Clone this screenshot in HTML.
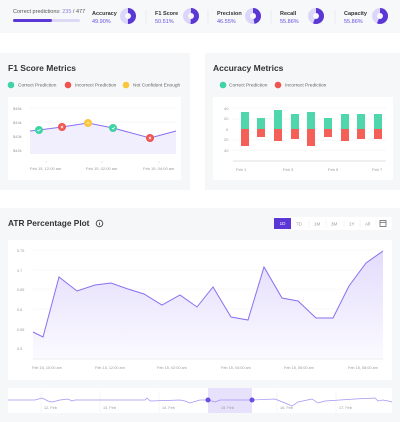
<!DOCTYPE html>
<html><head><style>
*{margin:0;padding:0;box-sizing:border-box}
body{width:400px;height:422px;background:#fff;font-family:"Liberation Sans",sans-serif;position:relative;overflow:hidden;color:#222}
.a{position:absolute}
.card{position:absolute;background:#f6f7f9}
</style></head><body>
<div class="a" style="left:0;top:0;width:400px;height:33px;background:#f7f8fa"></div>
<div class="a" style="left:13px;top:9px;font-size:5.5px;color:#555">Correct predictions: <span style="color:#8b7ce0">235</span> / 477</div>
<div class="a" style="left:13px;top:19px;width:67px;height:3px;background:#ddd8f5;border-radius:2px"></div>
<div class="a" style="left:13px;top:19px;width:39px;height:3px;background:#5b37d6;border-radius:2px"></div>
<svg class="a" style="left:0;top:0" width="400" height="33">
<g font-size="5.5" font-family="Liberation Sans" >
<text x="92" y="15" font-weight="bold" fill="#333">Accuracy</text><text x="92" y="23" fill="#6a4ee0">49.90%</text>
<text x="155" y="15" font-weight="bold" fill="#333">F1 Score</text><text x="155" y="23" fill="#6a4ee0">50.51%</text>
<text x="217" y="15" font-weight="bold" fill="#333">Precision</text><text x="217" y="23" fill="#6a4ee0">46.55%</text>
<text x="280" y="15" font-weight="bold" fill="#333">Recall</text><text x="280" y="23" fill="#6a4ee0">55.86%</text>
<text x="344" y="15" font-weight="bold" fill="#333">Capacity</text><text x="344" y="23" fill="#6a4ee0">55.86%</text>
</g>
<g stroke="#e2e2e8" stroke-width="0.6"><line x1="146" y1="10" x2="146" y2="24"/><line x1="208" y1="10" x2="208" y2="24"/><line x1="271" y1="10" x2="271" y2="24"/><line x1="335" y1="10" x2="335" y2="24"/></g>
<g fill="none" stroke-width="5">
<circle cx="128" cy="16" r="5.5" stroke="#ddd6fb"/><circle cx="128" cy="16" r="5.5" stroke="#5b37d6" stroke-dasharray="17.2 40" transform="rotate(-90 128 16)"/>
<circle cx="191" cy="16" r="5.5" stroke="#ddd6fb"/><circle cx="191" cy="16" r="5.5" stroke="#5b37d6" stroke-dasharray="17.5 40" transform="rotate(-90 191 16)"/>
<circle cx="253" cy="16" r="5.5" stroke="#ddd6fb"/><circle cx="253" cy="16" r="5.5" stroke="#5b37d6" stroke-dasharray="16.1 40" transform="rotate(-90 253 16)"/>
<circle cx="316" cy="16" r="5.5" stroke="#ddd6fb"/><circle cx="316" cy="16" r="5.5" stroke="#5b37d6" stroke-dasharray="19.3 40" transform="rotate(-90 316 16)"/>
<circle cx="380" cy="16" r="5.5" stroke="#ddd6fb"/><circle cx="380" cy="16" r="5.5" stroke="#5b37d6" stroke-dasharray="19.3 40" transform="rotate(-90 380 16)"/>
</g></svg>

<div class="card" style="left:0;top:53px;width:190px;height:137px"></div>
<div class="card" style="left:205px;top:53px;width:195px;height:137px"></div>
<div class="a" style="left:8px;top:63px;font-size:8.5px;font-weight:bold;color:#333">F1 Score Metrics</div>
<div class="a" style="left:213px;top:63px;font-size:8.5px;font-weight:bold;color:#333">Accuracy Metrics</div>
<div class="a" style="left:8px;top:97px;width:173px;height:83px;background:#fff"></div>
<div class="a" style="left:213px;top:97px;width:180px;height:83px;background:#fff"></div>
<svg class="a" style="left:0;top:50px" width="400" height="140">
<g font-family="Liberation Sans" font-size="4.8" fill="#666">
<circle cx="11" cy="35" r="3.3" fill="#3fd3a5"/><text x="18" y="36.6">Correct Prediction</text>
<circle cx="68" cy="35" r="3.3" fill="#f0544f"/><text x="75" y="36.6">Incorrect Prediction</text>
<circle cx="126" cy="35" r="3.3" fill="#f9c63c"/><text x="133" y="36.6">Not Confident Enough</text>
<circle cx="223" cy="35" r="3.3" fill="#3fd3a5"/><text x="229" y="36.6">Correct Prediction</text>
<circle cx="278" cy="35" r="3.3" fill="#f0544f"/><text x="285" y="36.6">Incorrect Prediction</text>
</g>
<g stroke="#eee" stroke-width="0.5"><line x1="30" y1="58" x2="176" y2="58"/><line x1="30" y1="72" x2="176" y2="72"/><line x1="30" y1="86" x2="176" y2="86"/><line x1="30" y1="100" x2="176" y2="100"/>
<line x1="233" y1="58" x2="386" y2="58"/><line x1="233" y1="69" x2="386" y2="69"/><line x1="233" y1="90" x2="386" y2="90"/><line x1="233" y1="100" x2="386" y2="100"/><line x1="233" y1="111" x2="386" y2="111"/></g>
<path d="M30 81 L39 80 L62 77 L88 73 L113 78 L150 88 L176 81 L176 104 L30 104Z" fill="#f1eefd"/>
<g font-family="Liberation Sans" font-size="4" fill="#999"><text x="13" y="60">$45k</text><text x="13" y="74">$44k</text><text x="13" y="88">$43k</text><text x="13" y="102">$42k</text>
<text x="30" y="120">Feb 15, 12:00 am</text><text x="86" y="120">Feb 15, 02:00 am</text><text x="143" y="120">Feb 15, 04:00 am</text>
<text x="224" y="60">40</text><text x="224" y="70">20</text><text x="226" y="81">0</text><text x="224" y="91">20</text><text x="224" y="102">40</text>
<text x="236" y="121">Feb 1</text><text x="283" y="121">Feb 3</text><text x="328" y="121">Feb 5</text><text x="372" y="121">Feb 7</text></g>
<polyline points="30,81 39,80 62,77 88,73 113,78 150,88 176,81" fill="none" stroke="#8a6ff0" stroke-width="1"/>
<circle cx="39" cy="80" r="4" fill="#3fd3a5"/><circle cx="62" cy="77" r="4" fill="#f0544f"/><circle cx="88" cy="73" r="4" fill="#f9c63c"/><circle cx="113" cy="78" r="4" fill="#3fd3a5"/><circle cx="150" cy="88" r="4" fill="#f0544f"/>
<g stroke="#fff" stroke-width="0.7" fill="none"><path d="M37.5 80l1 1 2-2M112 78l1 1 2-2M60.8 75.8l2.4 2.4M63.2 75.8l-2.4 2.4M148.8 86.8l2.4 2.4M151.2 86.8l-2.4 2.4M86.5 73h3"/></g>
<g stroke="#ccc" stroke-width="0.5"><line x1="46" y1="111" x2="46" y2="113"/><line x1="102" y1="111" x2="102" y2="113"/><line x1="159" y1="111" x2="159" y2="113"/><line x1="233" y1="111" x2="386" y2="111"/></g>
<g fill="#4fd6ad"><rect x="241" y="62" width="8" height="17"/><rect x="257" y="68" width="8" height="11"/><rect x="274" y="60" width="8" height="19"/><rect x="291" y="64" width="8" height="15"/><rect x="307" y="62" width="8" height="17"/><rect x="324" y="68" width="8" height="11"/><rect x="341" y="64" width="8" height="15"/><rect x="357" y="64" width="8" height="15"/><rect x="374" y="64" width="8" height="15"/></g>
<g fill="#f45f57"><rect x="241" y="79" width="8" height="17"/><rect x="257" y="79" width="8" height="8"/><rect x="274" y="79" width="8" height="12"/><rect x="291" y="79" width="8" height="10"/><rect x="307" y="79" width="8" height="17"/><rect x="324" y="79" width="8" height="8"/><rect x="341" y="79" width="8" height="12"/><rect x="357" y="79" width="8" height="10"/><rect x="374" y="79" width="8" height="10"/></g>
</svg>

<div class="card" style="left:0;top:208px;width:400px;height:214px"></div>
<div class="a" style="left:8px;top:218px;font-size:8.3px;font-weight:bold;color:#333;white-space:nowrap">ATR Percentage Plot</div>
<svg class="a" style="left:95px;top:219px" width="9" height="9"><circle cx="4.5" cy="4.5" r="3.3" fill="none" stroke="#444" stroke-width="0.9"/><line x1="4.5" y1="3.5" x2="4.5" y2="6.3" stroke="#444" stroke-width="0.9"/></svg>
<div class="a" style="left:274px;top:217px;width:118px;height:13px;background:#fff"></div>
<div class="a" style="left:274px;top:218px;width:17px;height:11px;background:#5b37d6;color:#fff;font-size:4.5px;text-align:center;line-height:11px">1D</div>
<svg class="a" style="left:274px;top:217px" width="118" height="13"><g font-family="Liberation Sans" font-size="4.5" fill="#999"><text x="22" y="8.5">7D</text><text x="40" y="8.5">1M</text><text x="57" y="8.5">3M</text><text x="75" y="8.5">1Y</text><text x="91" y="8.5">All</text></g>
<g stroke="#eee" stroke-width="0.5"><line x1="35" y1="3" x2="35" y2="10"/><line x1="52" y1="3" x2="52" y2="10"/><line x1="70" y1="3" x2="70" y2="10"/><line x1="86" y1="3" x2="86" y2="10"/><line x1="102" y1="3" x2="102" y2="10"/></g>
<rect x="106" y="3.5" width="6" height="6" fill="none" stroke="#555" stroke-width="0.7"/><line x1="106" y1="5.3" x2="112" y2="5.3" stroke="#555" stroke-width="0.7"/></svg>
<div class="a" style="left:8px;top:240px;width:384px;height:140px;background:#fff"></div>
<svg class="a" style="left:0;top:240px" width="400" height="182">
<defs><linearGradient id="g" x1="0" y1="0" x2="0" y2="1"><stop offset="0" stop-color="#e3dcfc"/><stop offset="1" stop-color="#fbfaff"/></linearGradient></defs>
<g stroke="#f0f0f0" stroke-width="0.5"><line x1="33" y1="10" x2="383" y2="10"/><line x1="33" y1="30" x2="383" y2="30"/><line x1="33" y1="49" x2="383" y2="49"/><line x1="33" y1="69" x2="383" y2="69"/><line x1="33" y1="89" x2="383" y2="89"/><line x1="33" y1="108" x2="383" y2="108"/></g>
<g font-family="Liberation Sans" font-size="3.8" fill="#999"><text x="17" y="12">0.75</text><text x="17" y="32">0.7</text><text x="17" y="51">0.65</text><text x="17" y="71">0.6</text><text x="17" y="91">0.55</text><text x="17" y="110">0.5</text>
<text x="32" y="129">Feb 15, 10:00 am</text><text x="95" y="129">Feb 15, 12:00 am</text><text x="157" y="129">Feb 15, 02:00 am</text><text x="221" y="129">Feb 15, 04:00 am</text><text x="284" y="129">Feb 15, 06:00 am</text><text x="348" y="129">Feb 15, 08:00 am</text></g>
<path d="M33 92 L43 97 L59 37 L77 51 L95 45 L111 43 L128 49 L144 54 L162 65 L180 55 L197 67 L213 47 L231 77 L248 80 L264 27 L282 58 L298 61 L316 78 L333 78 L349 46 L366 23 L383 11 L383 119 L33 119Z" fill="url(#g)"/>
<polyline points="33,92 43,97 59,37 77,51 95,45 111,43 128,49 144,54 162,65 180,55 197,67 213,47 231,77 248,80 264,27 282,58 298,61 316,78 333,78 349,46 366,23 383,11" fill="none" stroke="#8a6ff0" stroke-width="1"/>
<line x1="33" y1="119" x2="383" y2="119" stroke="#ddd" stroke-width="0.5"/>
<rect x="8" y="148" width="384" height="25" fill="#fff"/>
<rect x="208" y="148" width="44" height="25" fill="#e7e1fc"/>
<g stroke="#eee" stroke-width="0.5"><line x1="41" y1="151" x2="41" y2="173"/><line x1="100" y1="151" x2="100" y2="173"/><line x1="159" y1="151" x2="159" y2="173"/><line x1="277" y1="151" x2="277" y2="173"/><line x1="336" y1="151" x2="336" y2="173"/></g>
<polyline points="8,160 35,160 42,158 48,161 52,162 60,160 68,159 72,161 75,160 90,160 145,160 147,158 150,161 180,160 185,161 190,163 200,160 208,160 215,162 220,160 252,160 275,159 285,163 292,166 298,162 312,159 318,163 325,161 355,159 375,158 378,161 383,160 388,161 392,162" fill="none" stroke="#a593f4" stroke-width="0.7"/>
<circle cx="208" cy="160" r="2.5" fill="#6a4ee0"/><circle cx="252" cy="160" r="2.5" fill="#6a4ee0"/>
<g font-family="Liberation Sans" font-size="3.8" fill="#999"><text x="44" y="169">12. Feb</text><text x="103" y="169">13. Feb</text><text x="162" y="169">14. Feb</text><text x="221" y="169">15. Feb</text><text x="280" y="169">16. Feb</text><text x="339" y="169">17. Feb</text></g>
</svg>
</body></html>
